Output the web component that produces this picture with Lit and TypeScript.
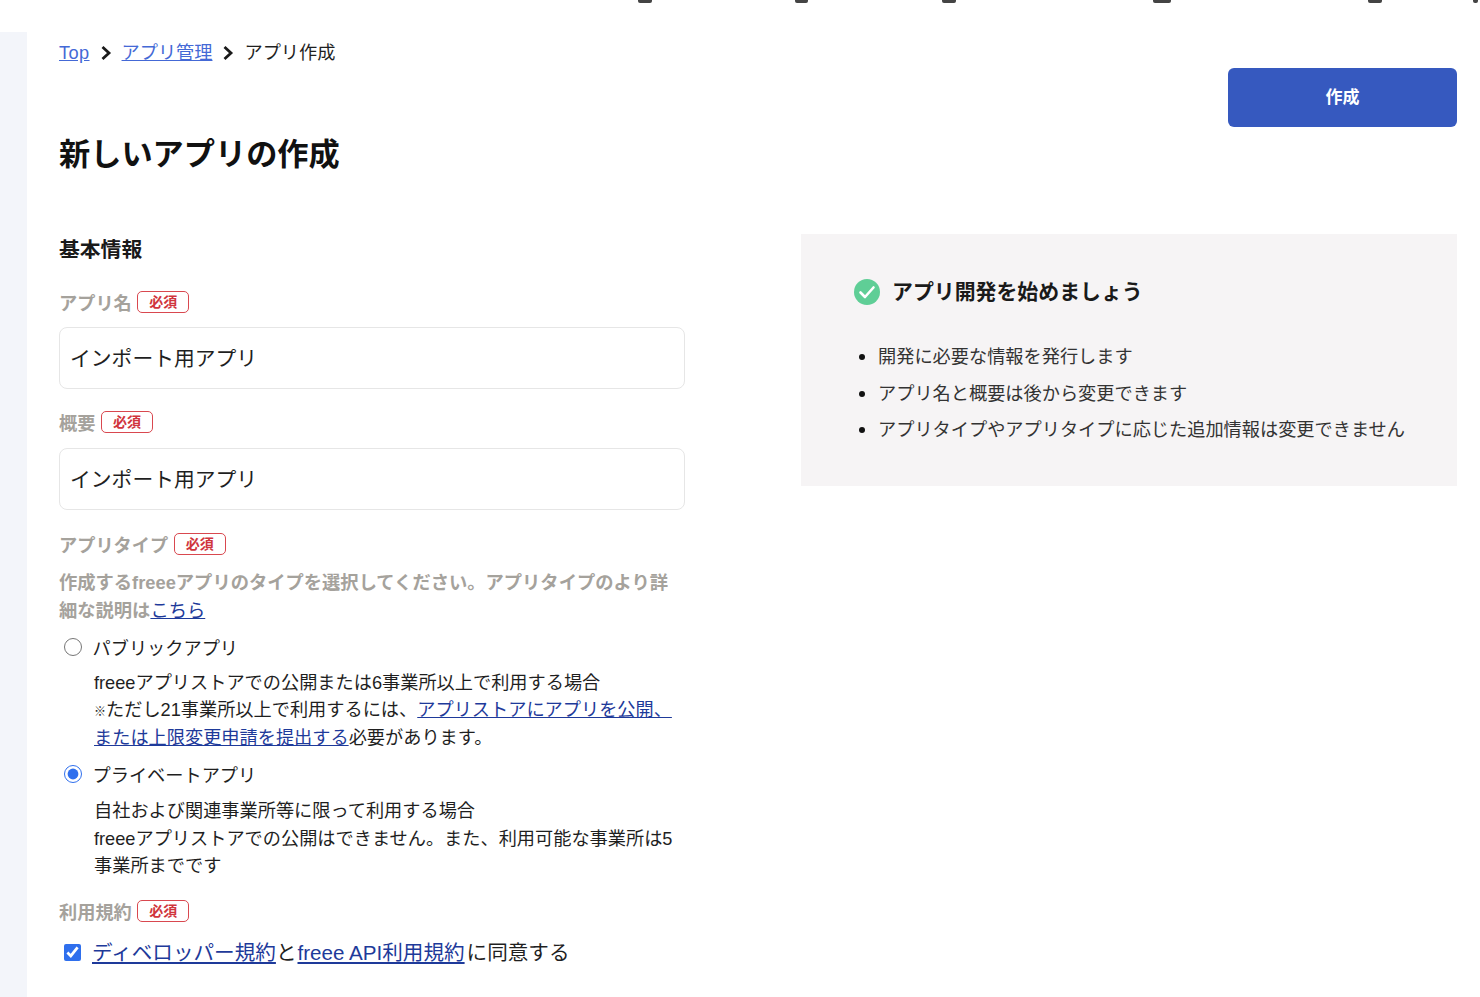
import { LitElement, css, html } from "lit";
import { customElement } from "lit/decorators.js";

@customElement("app-root")
export class AppRoot extends LitElement {
  static styles = css`
    :host {
      display: block;
      width: 1480px;
      height: 997px;
      overflow: hidden;
      background: #fff;
      color: #1f1f1f;
      font-family: "Liberation Sans", "Noto Sans CJK JP", sans-serif;
      font-size: 18.2px;
    }
    a {
      color: #1e3a9a;
    }
    .top {
      height: 32px;
      position: relative;
    }
    .top i {
      position: absolute;
      top: 0;
      height: 3px;
      background: #444;
      border-radius: 0 0 2px 2px;
    }
    .body {
      display: flex;
      height: 965px;
    }
    .side {
      width: 27px;
      flex: none;
      background: #f3f5fa;
    }
    .main {
      flex: 1;
      padding: 9px 23px 0 32px;
    }
    .head {
      display: flex;
      justify-content: space-between;
      align-items: flex-start;
      height: 193px;
    }
    .crumbs {
      display: flex;
      align-items: center;
      gap: 9px;
      height: 24px;
      line-height: 24px;
    }
    .crumbs a {
      color: #4469d6;
    }
    .crumbs .home {
      letter-spacing: 0.4px;
    }
    .crumbs svg {
      display: block;
    }
    h1 {
      margin: 68px 0 0;
      font-size: 31.2px;
      line-height: 44px;
      font-weight: 700;
      color: #111;
    }
    .create {
      margin-top: 27px;
      width: 229px;
      height: 59px;
      padding: 0 0 5px;
      border: 0;
      border-radius: 6px;
      background: #3659bf;
      color: #fff;
      font: inherit;
      font-size: 17px;
      font-weight: 700;
    }
    .cols {
      display: grid;
      grid-template-columns: 626px 656px;
      column-gap: 116px;
      align-items: start;
    }
    h2 {
      margin: 1px 0 0;
      font-size: 20.8px;
      line-height: 30px;
      font-weight: 700;
      color: #1a1a1a;
    }
    .label {
      display: flex;
      align-items: center;
      gap: 5.5px;
      height: 24px;
      color: #a5a29c;
      font-weight: 700;
    }
    .badge {
      box-sizing: border-box;
      width: 52px;
      height: 22px;
      border: 1.5px solid #d9484f;
      border-radius: 5px;
      color: #d0353d;
      font-size: 14px;
      line-height: 20px;
      text-align: center;
    }
    .l1 {
      margin-top: 25px;
    }
    input[type="text"] {
      display: block;
      box-sizing: border-box;
      width: 626px;
      height: 62px;
      margin-top: 13px;
      padding: 0 10px 2px;
      border: 1.5px solid #e6e6e6;
      border-radius: 8px;
      font: inherit;
      font-size: 20.8px;
      color: #1f1f1f;
      background: #fff;
    }
    .l2 {
      margin-top: 21px;
    }
    input.input2 {
      margin-top: 14px;
    }
    .l3 {
      margin-top: 22px;
    }
    .note {
      margin: 13px 0 0;
      width: 626px;
      font-size: 18.3px;
      font-weight: 700;
      color: #a5a29c;
      line-height: 27.5px;
    }
    .note a {
      font-weight: 400;
    }
    .opt {
      display: flex;
      align-items: center;
      gap: 10.5px;
      height: 24px;
      padding-left: 5px;
    }
    .opt input {
      width: 18px;
      height: 18px;
      margin: 0;
      accent-color: #2f6fed;
    }
    .opt1 {
      margin-top: 11px;
    }
    .opt2 {
      margin-top: 10px;
    }
    .desc {
      margin: 11px 0 0 35px;
      line-height: 27.4px;
    }
    .desc2 {
      margin-top: 12px;
    }
    .mark {
      font-size: 12px;
      font-weight: 700;
      line-height: 1;
    }
    .l4 {
      margin-top: 19px;
    }
    .agree {
      display: flex;
      align-items: center;
      gap: 11px;
      height: 30px;
      margin-top: 13px;
      padding-left: 5px;
      font-size: 20.6px;
    }
    .agree a + a {
      margin: 0 2px 0 1px;
    }
    .agree input {
      width: 17px;
      height: 17px;
      margin: 3px 0 0;
      accent-color: #2f6fed;
    }
    .panel {
      box-sizing: border-box;
      height: 252px;
      background: #f6f4f5;
      padding: 43px 50px 0 52px;
    }
    .panel h3 {
      display: flex;
      align-items: center;
      gap: 11px;
      margin: 0;
      font-size: 20.9px;
      line-height: 30px;
      font-weight: 700;
      color: #1a1a1a;
    }
    .panel svg {
      display: block;
      flex: none;
    }
    .panel ul {
      margin: 31px 0 0;
      padding: 0 0 0 25px;
      line-height: 36.5px;
      color: #333;
    }
    .panel li {
      height: 36.5px;
    }
    .panel li::marker {
      color: #111;
      font-size: 20px;
    }
  `;

  render() {
    return html`
      <div class="top">
        <i style="left:638px;width:14px"></i>
        <i style="left:795px;width:13px"></i>
        <i style="left:942px;width:14px"></i>
        <i style="left:1153px;width:18px"></i>
        <i style="left:1368px;width:14px"></i>
        <i style="left:1473px;width:5px"></i>
      </div>
      <div class="body">
        <div class="side"></div>
        <div class="main">
          <div class="head">
            <div>
              <nav class="crumbs">
                <a class="home" href="#">Top</a>
                ${this.chevron()}
                <a href="#">アプリ管理</a>
                ${this.chevron()}
                <span>アプリ作成</span>
              </nav>
              <h1>新しいアプリの作成</h1>
            </div>
            <button class="create">作成</button>
          </div>
          <div class="cols">
            <form>
              <h2>基本情報</h2>
              <div class="label l1">アプリ名<span class="badge">必須</span></div>
              <input type="text" value="インポート用アプリ" />
              <div class="label l2">概要<span class="badge">必須</span></div>
              <input class="input2" type="text" value="インポート用アプリ" />
              <div class="label l3">アプリタイプ<span class="badge">必須</span></div>
              <p class="note">
                作成するfreeeアプリのタイプを選択してください。アプリタイプのより詳細な説明は<a href="#">こちら</a>
              </p>
              <label class="opt opt1"><input type="radio" name="type" />パブリックアプリ</label>
              <div class="desc">
                freeeアプリストアでの公開または6事業所以上で利用する場合<br />
                <span class="mark">※</span>ただし21事業所以上で利用するには、<a href="#">アプリストアにアプリを公開、または上限変更申請を提出する</a>必要があります。
              </div>
              <label class="opt opt2"><input type="radio" name="type" checked />プライベートアプリ</label>
              <div class="desc desc2">
                自社および関連事業所等に限って利用する場合<br />
                freeeアプリストアでの公開はできません。また、利用可能な事業所は5事業所までです
              </div>
              <div class="label l4">利用規約<span class="badge">必須</span></div>
              <label class="agree">
                <input type="checkbox" checked />
                <span><a href="#">ディベロッパー規約</a>と<a href="#">freee API利用規約</a>に同意する</span>
              </label>
            </form>
            <aside class="panel">
              <h3>
                <svg width="28" height="28" viewBox="0 0 28 28">
                  <circle cx="14" cy="14" r="13" fill="#5fce96" />
                  <path d="M7.5 14.5l4.5 4.5 8.5-9.5" fill="none" stroke="#fff" stroke-width="2.6" stroke-linecap="round" stroke-linejoin="round" />
                </svg>
                アプリ開発を始めましょう
              </h3>
              <ul>
                <li>開発に必要な情報を発行します</li>
                <li>アプリ名と概要は後から変更できます</li>
                <li>アプリタイプやアプリタイプに応じた追加情報は変更できません</li>
              </ul>
            </aside>
          </div>
        </div>
      </div>
    `;
  }

  private chevron() {
    return html`<svg width="14" height="16" viewBox="0 0 14 16">
      <path d="M3.5 2l6.5 6-6.5 6" fill="none" stroke="#1a1a1a" stroke-width="2.8" />
    </svg>`;
  }
}
